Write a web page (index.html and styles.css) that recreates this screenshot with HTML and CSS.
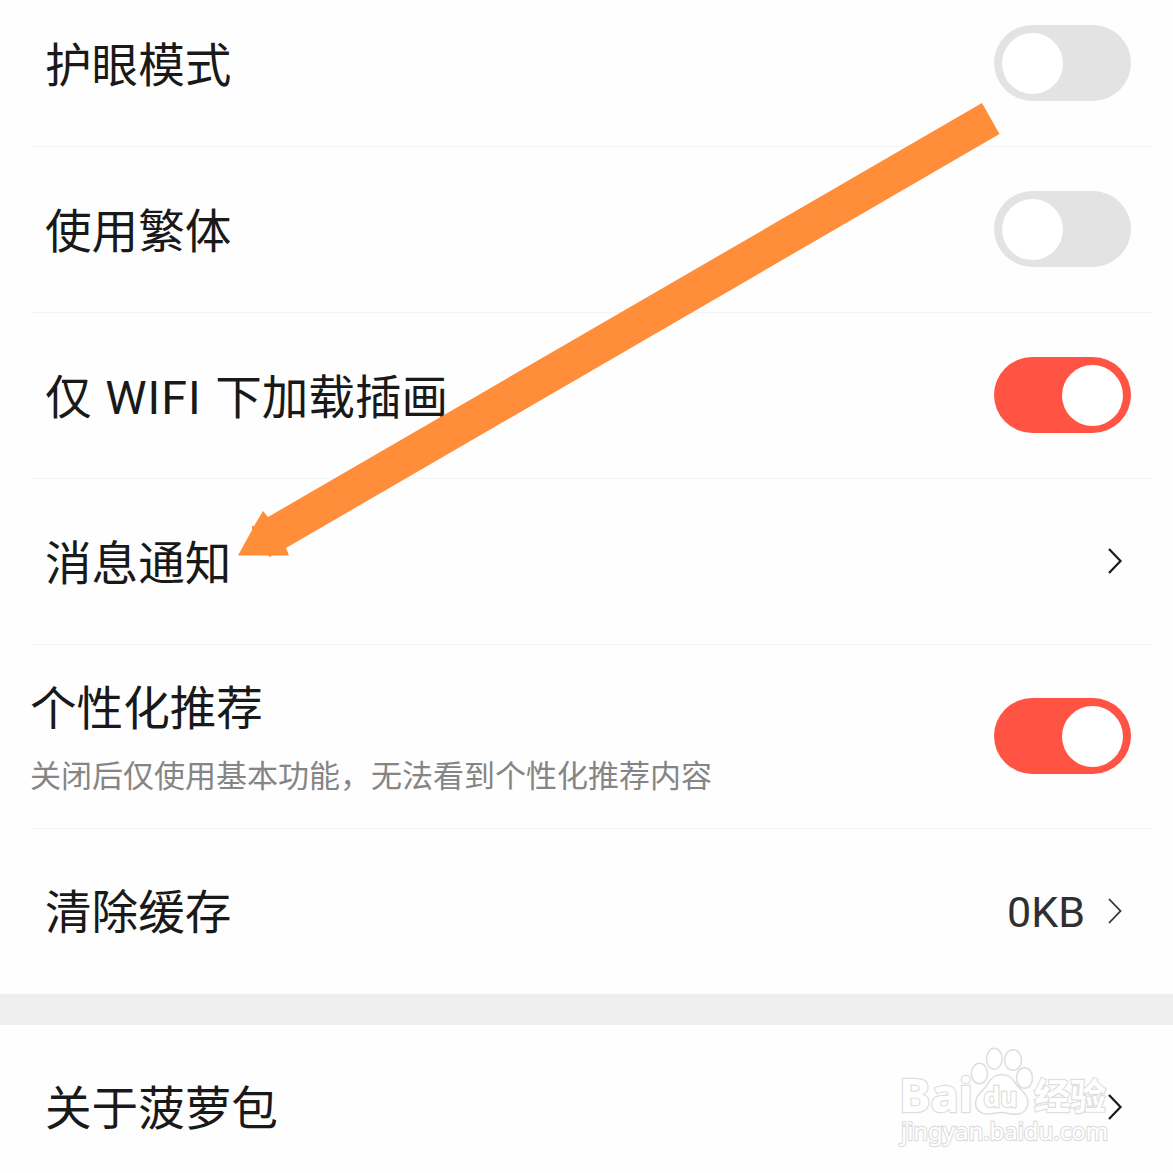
FILE: index.html
```html
<!DOCTYPE html>
<html lang="zh-CN">
<head>
<meta charset="utf-8">
<title>设置</title>
<link rel="stylesheet" href="styles.css">
</head>
<body>
<main class="page">
  <section class="list">
    <div class="row row-first"><span class="label">护眼模式</span><span class="switch"></span></div>
    <div class="row"><span class="label">使用繁体</span><span class="switch"></span></div>
    <div class="row"><span class="label">仅 <span class="latin">WIFI</span> 下加载插画</span><span class="switch on"></span></div>
    <div class="row"><span class="label">消息通知</span>
      <svg class="chevron" viewBox="0 0 16 28"><path d="M2 2 13.5 14 2 26"/></svg></div>
    <div class="row row-tall">
      <div class="texts"><span class="label">个性化推荐</span><span class="hint">关闭后仅使用基本功能，无法看到个性化推荐内容</span></div>
      <span class="switch on"></span>
    </div>
    <div class="row row-last"><span class="label">清除缓存</span>
      <span class="value">0KB</span><svg class="chevron soft" viewBox="0 0 16 28"><path d="M2 2 13.5 14 2 26"/></svg></div>
  </section>
  <section class="list about">
    <div class="row row-last"><span class="label">关于菠萝包</span>
      <svg class="chevron" viewBox="0 0 16 28"><path d="M2 2 13.5 14 2 26"/></svg></div>
  </section>
  <svg class="overlay" viewBox="0 0 1173 1173">
    <polygon class="arrow" points="982,103 999.5,134 286,548 289,555.5 272,555.5 270,557 268,555.5 238,555.5 252,530 252,526 254,526 263,511 268,517"/>
    <g class="mark">
      <text class="mark-bai" x="899" y="1112" textLength="74" lengthAdjust="spacingAndGlyphs">Bai</text>
      <ellipse cx="979.5" cy="1073.5" rx="8" ry="10.3"/>
      <ellipse cx="994.3" cy="1058.700" rx="7.8" ry="10.5"/>
      <ellipse cx="1013" cy="1060" rx="8.5" ry="10.3"/>
      <ellipse cx="1024.5" cy="1078" rx="8" ry="10.3"/>
      <path d="M1001.500 1074.500C994 1074.500 990 1079 987 1085C984 1091 975.500 1094 975.500 1103C975.500 1110 981 1114 987 1114C993 1114 996 1112.500 1001 1112.500C1007 1112.500 1011 1114.500 1016 1114.300C1023 1114 1028 1109 1028 1102C1028 1094 1020 1090 1016 1084C1012 1078 1009 1074.500 1001.500 1074.500Z"/>
      <text class="mark-du" x="983.5" y="1107" textLength="34" lengthAdjust="spacingAndGlyphs">du</text>
      <text class="mark-cn" x="1034" y="1109.500">经验</text>
      <text class="mark-url" x="901" y="1140" textLength="207" lengthAdjust="spacingAndGlyphs">jingyan.baidu.com</text>
    </g>
  </svg>
</main>
</body>
</html>
```
FILE: styles.css
```css
* { box-sizing: border-box; }
body { margin: 0; background: #fefefe; }
.page {
  position: relative;
  width: 1173px;
  height: 1173px;
  overflow: hidden;
  font-family: Roboto, "Noto Sans CJK SC", sans-serif;
  color: #191919;
}
.list { display: flex; flex-direction: column; }
.row {
  display: flex;
  align-items: center;
  height: 166px;
  margin: 0 21px 0 31px;
  padding: 0 21px 1px 14px;
  border-bottom: 1px solid #f3f3f3;
}
.row-first { height: 147px; padding-bottom: 20px; }
.row-tall { height: 184px; padding-left: 0; }
.row-last { border-bottom: 0; height: 165px; padding-bottom: 2px; }
.label {
  padding-top: 5px;
  font-size: 46.6px;
  line-height: 60px;
  word-spacing: 2px;
  white-space: nowrap;
}
.latin { letter-spacing: 1px; }
.texts { display: flex; flex-direction: column; gap: 16px; margin-left: -1px; }
.hint { font-size: 31px; line-height: 44px; color: #858585; white-space: nowrap; }
.switch {
  width: 137px;
  height: 76px;
  margin-left: auto;
  padding: 0 8px;
  border-radius: 38px;
  background: #e3e3e3;
  display: flex;
  align-items: center;
}
.switch::before {
  content: "";
  width: 61px;
  height: 61px;
  border-radius: 50%;
  background: #fff;
}
.switch.on { background: #ff5444; justify-content: flex-end; }
.value { margin-left: auto; padding-top: 2px; font-size: 43px; line-height: 60px; color: #303032; }
.chevron {
  width: 16px;
  height: 28px;
  margin: 0 8px 0 auto;
  fill: none;
  stroke: #191919;
  stroke-width: 2.2;
}
.value + .chevron { margin-left: 22px; }
.chevron.soft { stroke: #303032; stroke-width: 1.8; }
.about { border-top: 31px solid #efefef; }
.overlay { position: absolute; inset: 0; width: 1173px; height: 1173px; }
.arrow { fill: #ff8d3a; }
.mark { fill: #fff; stroke: #dedede; stroke-width: 1.5; }
.mark text { paint-order: stroke; stroke-width: 2.4; }
.mark-bai { font: bold 46px "Noto Sans", sans-serif; }
.mark-du { font: bold 26px "Noto Sans", sans-serif; }
.mark-cn { font: bold 36px "Noto Sans CJK SC", sans-serif; }
.mark-url { font: 24px "Noto Sans", sans-serif; }
```
